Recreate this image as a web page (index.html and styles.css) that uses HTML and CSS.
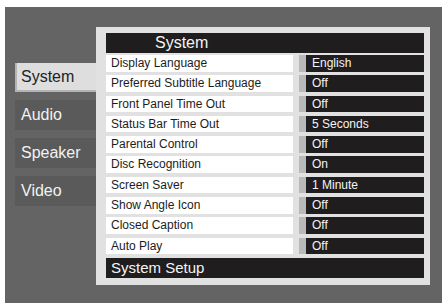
FILE: index.html
```html
<!DOCTYPE html>
<html>
<head>
<meta charset="utf-8">
<link rel="stylesheet" href="styles.css">
</head>
<body>
<div class="screen">
  <div class="tabs">
    <div class="tab active">System</div>
    <div class="tab">Audio</div>
    <div class="tab">Speaker</div>
    <div class="tab">Video</div>
  </div>
  <div class="panel">
    <div class="title">System</div>
    <div class="rows">
      <div class="row"><div class="label">Display Language</div><div class="strip"></div><div class="value">English</div></div>
      <div class="row"><div class="label">Preferred Subtitle Language</div><div class="strip"></div><div class="value">Off</div></div>
      <div class="row"><div class="label">Front Panel Time Out</div><div class="strip"></div><div class="value">Off</div></div>
      <div class="row"><div class="label">Status Bar Time Out</div><div class="strip"></div><div class="value">5 Seconds</div></div>
      <div class="row"><div class="label">Parental Control</div><div class="strip"></div><div class="value">Off</div></div>
      <div class="row"><div class="label">Disc Recognition</div><div class="strip"></div><div class="value">On</div></div>
      <div class="row"><div class="label">Screen Saver</div><div class="strip"></div><div class="value">1 Minute</div></div>
      <div class="row"><div class="label">Show Angle Icon</div><div class="strip"></div><div class="value">Off</div></div>
      <div class="row"><div class="label">Closed Caption</div><div class="strip"></div><div class="value">Off</div></div>
      <div class="row"><div class="label">Auto Play</div><div class="strip"></div><div class="value">Off</div></div>
    </div>
    <div class="footer">System Setup</div>
  </div>
</div>
</body>
</html>
```
FILE: styles.css
```css
html, body {
  margin: 0;
  padding: 0;
  background: #ffffff;
}
body {
  font-family: "Liberation Sans", Arial, sans-serif;
  width: 442px;
  height: 303px;
  overflow: hidden;
}
.screen {
  margin: 7px 0 0 5px;
  width: 437px;
  height: 296px;
  background: #646464;
  display: flex;
  align-items: flex-start;
}
.tabs {
  margin-top: 56px;
  margin-left: 10px;
  width: 81px;
  display: flex;
  flex-direction: column;
  gap: 8px;
}
.tab {
  height: 30px;
  line-height: 29px;
  padding-left: 6px;
  background: #5a5a5a;
  color: #f2f2f2;
  font-size: 16px;
}
.tab.active {
  background: #dedede;
  color: #222;
  border-left: 2px solid #b4b4b4;
  border-bottom: 2px solid #b4b4b4;
  height: 27px;
  line-height: 27px;
  padding-left: 4px;
}
.panel {
  margin-top: 20px;
  width: 334px;
  height: 258px;
  box-sizing: border-box;
  background: #e1e1e1;
  padding: 6px 6px 0 10px;
}
.title {
  height: 20px;
  line-height: 20px;
  background: #1f1d1e;
  color: #f4f4f4;
  font-size: 16px;
  padding-left: 49px;
}
.rows {
  margin-top: 2px;
  display: flex;
  flex-direction: column;
  gap: 3.8px;
}
.row {
  display: flex;
  height: 16.5px;
}
.label {
  width: 186.5px;
  background: #ffffff;
  color: #1c1c1c;
  font-size: 12px;
  line-height: 17px;
  padding-left: 5px;
  box-sizing: border-box;
}
.strip {
  margin-left: 6px;
  width: 7.5px;
  background: #b9b9b9;
}
.value {
  width: 118px;
  background: #1f1d1e;
  color: #f4f4f4;
  font-size: 12px;
  line-height: 17px;
  padding-left: 6px;
  box-sizing: border-box;
}
.footer {
  margin-top: 3.5px;
  height: 20px;
  line-height: 20px;
  background: #1f1d1e;
  color: #f4f4f4;
  font-size: 15px;
  padding-left: 5px;
}
```
